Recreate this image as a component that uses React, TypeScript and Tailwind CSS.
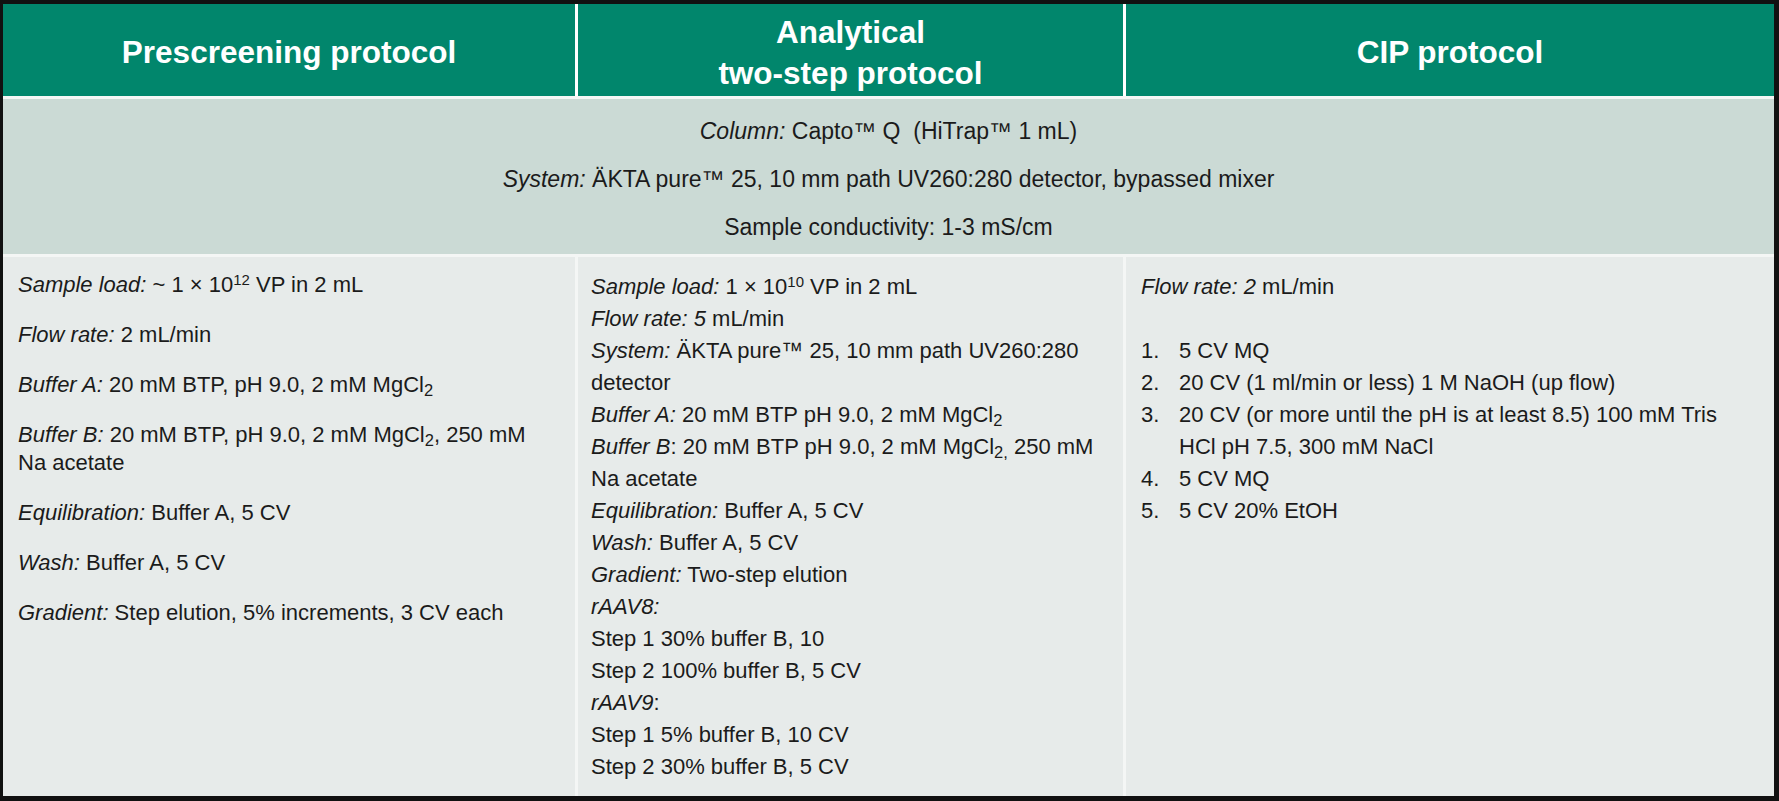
import React from "react";

const I = ({ children }: { children: React.ReactNode }) => <em className="italic">{children}</em>;

const Sup = ({ children }: { children: React.ReactNode }) => <sup className="text-[0.68em]">{children}</sup>;

function LeftCell() {
  return (
    <div className="bg-[#e7ebea] pt-[14px] pl-[15px] text-[22px] leading-[28px] text-[#1b1b1b] whitespace-nowrap">
      <p className="mb-[22px]">
        <I>Sample load:</I> ~ 1 × 10<Sup>12</Sup> VP in 2 mL
      </p>
      <p className="mb-[22px]">
        <I>Flow rate:</I> 2 mL/min
      </p>
      <p className="mb-[22px]">
        <I>Buffer A:</I> 20 mM BTP, pH 9.0, 2 mM MgCl<sub>2</sub>
      </p>
      <p className="mb-[22px]">
        <I>Buffer B:</I> 20 mM BTP, pH 9.0, 2 mM MgCl<sub>2</sub>, 250 mM
        <br />
        Na acetate
      </p>
      <p className="mb-[22px]">
        <I>Equilibration:</I> Buffer A, 5 CV
      </p>
      <p className="mb-[22px]">
        <I>Wash:</I> Buffer A, 5 CV
      </p>
      <p>
        <I>Gradient:</I> Step elution, 5% increments, 3 CV each
      </p>
    </div>
  );
}

function MiddleCell() {
  return (
    <div className="bg-[#e7ebea] pt-[14px] pl-[13px] text-[22px] leading-[32px] text-[#1b1b1b] whitespace-nowrap">
      <p>
        <I>Sample load:</I> 1 × 10<Sup>10</Sup> VP in 2 mL
      </p>
      <p>
        <I>Flow rate: 5</I> mL/min
      </p>
      <p>
        <I>System:</I> ÄKTA pure™ 25, 10 mm path UV260:280
        <br />
        detector
      </p>
      <p>
        <I>Buffer A:</I> 20 mM BTP pH 9.0, 2 mM MgCl<sub>2</sub>
      </p>
      <p>
        <I>Buffer B</I>: 20 mM BTP pH 9.0, 2 mM MgCl<sub>2,</sub> 250 mM
        <br />
        Na acetate
      </p>
      <p>
        <I>Equilibration:</I> Buffer A, 5 CV
      </p>
      <p>
        <I>Wash:</I> Buffer A, 5 CV
      </p>
      <p>
        <I>Gradient:</I> Two-step elution
      </p>
      <p>
        <I>rAAV8:</I>
      </p>
      <p>Step 1 30% buffer B, 10</p>
      <p>Step 2 100% buffer B, 5 CV</p>
      <p>
        <I>rAAV9</I>:
      </p>
      <p>Step 1 5% buffer B, 10 CV</p>
      <p>Step 2 30% buffer B, 5 CV</p>
    </div>
  );
}

const cipSteps: React.ReactNode[] = [
  "5 CV MQ",
  "20 CV (1 ml/min or less) 1 M NaOH (up flow)",
  <>
    20 CV (or more until the pH is at least 8.5) 100 mM Tris
    <br />
    HCl pH 7.5, 300 mM NaCl
  </>,
  "5 CV MQ",
  "5 CV 20% EtOH",
];

function CipCell() {
  return (
    <div className="bg-[#e7ebea] pt-[14px] pl-[15px] text-[22px] leading-[32px] text-[#1b1b1b] whitespace-nowrap">
      <p className="mb-[32px]">
        <I>Flow rate: 2</I> mL/min
      </p>
      <ol>
        {cipSteps.map((step, i) => (
          <li key={i} className="flex">
            <span className="w-[38px] shrink-0">{i + 1}.</span>
            <span>{step}</span>
          </li>
        ))}
      </ol>
    </div>
  );
}

export default function App() {
  return (
    <div className="w-[1779px] h-[801px] bg-[#111111] pt-[4px] pl-[3px] font-['Liberation_Sans',Arial,sans-serif]">
      <div className="w-[1771px] h-[792px] bg-[#f4f6f5] flex flex-col gap-[3px]">
        <div className="h-[92px] grid grid-cols-[572px_545px_648px] gap-[3px] bg-white">
          <div className="bg-[#01866c] flex items-center justify-center pt-[4px] text-[31.5px] font-bold leading-[41px] text-white">
            Prescreening protocol
          </div>
          <div className="bg-[#01866c] flex flex-col items-center justify-center pt-[5px] text-[31.5px] font-bold leading-[41px] text-white text-center">
            <span>Analytical</span>
            <span>two-step protocol</span>
          </div>
          <div className="bg-[#01866c] flex items-center justify-center pt-[4px] text-[31.5px] font-bold leading-[41px] text-white">
            CIP protocol
          </div>
        </div>

        <div className="h-[155px] bg-[#cbdad5] pt-[8px] text-center text-[23px] leading-[48px] text-[#1b1b1b]">
          <p>
            <I>Column:</I> Capto™ Q&nbsp; (HiTrap™ 1 mL)
          </p>
          <p>
            <I>System:</I> ÄKTA pure™ 25, 10 mm path UV260:280 detector, bypassed mixer
          </p>
          <p>Sample conductivity: 1-3 mS/cm</p>
        </div>

        <div className="flex-1 grid grid-cols-[572px_545px_648px] gap-[3px]">
          <LeftCell />
          <MiddleCell />
          <CipCell />
        </div>
      </div>
    </div>
  );
}
